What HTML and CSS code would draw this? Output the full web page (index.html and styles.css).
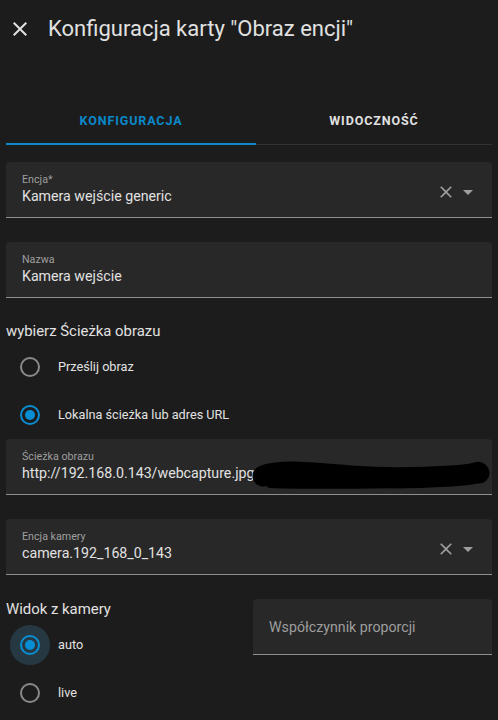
FILE: index.html
```html
<!DOCTYPE html>
<html lang="pl">
<head>
<meta charset="utf-8">
<link rel="stylesheet" href="styles.css">
</head>
<body>
<header class="header">
  <svg class="close" viewBox="0 0 24 24" width="24" height="24"><path d="M19,6.41L17.59,5L12,10.59L6.41,5L5,6.41L10.59,12L5,17.59L6.41,19L12,13.41L17.59,19L19,17.59L13.41,12L19,6.41Z"/></svg>
  <h1 class="title">Konfiguracja karty "Obraz encji"</h1>
</header>

<nav class="tabs">
  <div class="tab tab-active">KONFIGURACJA</div>
  <div class="tab tab-rest">WIDOCZNOŚĆ</div>
</nav>

<main class="content">
  <div class="field field-first">
    <div class="field-text">
      <div class="label">Encja*</div>
      <div class="value">Kamera wejście generic</div>
    </div>
    <div class="field-icons">
      <svg class="ico-clear" viewBox="0 0 24 24" width="20" height="20"><path d="M19,6.41L17.59,5L12,10.59L6.41,5L5,6.41L10.59,12L5,17.59L6.41,19L12,13.41L17.59,19L19,17.59L13.41,12L19,6.41Z"/></svg>
      <svg class="ico-drop" viewBox="0 0 24 24" width="24" height="24"><path d="M7,10L12,15L17,10H7Z"/></svg>
    </div>
  </div>

  <div class="field field-gap">
    <div class="field-text">
      <div class="label">Nazwa</div>
      <div class="value">Kamera wejście</div>
    </div>
  </div>

  <h2 class="heading heading-path">wybierz Ścieżka obrazu</h2>
  <div class="radio-row">
    <span class="radio-wrap"><span class="radio"></span></span>
    <span class="radio-label">Prześlij obraz</span>
  </div>
  <div class="radio-row">
    <span class="radio-wrap"><span class="radio radio-on"></span></span>
    <span class="radio-label">Lokalna ścieżka lub adres URL</span>
  </div>

  <div class="field field-scribbled">
    <div class="field-text">
      <div class="label">Ścieżka obrazu</div>
      <div class="value">http://192.168.0.143/webcapture.jpg</div>
    </div>
    <svg class="scribble" viewBox="0 0 240 30" width="240" height="30"><path d="M12,15 C30,8 60,12 100,15 S170,17 200,15 S226,10 228,12" fill="none" stroke="#000" stroke-width="21" stroke-linecap="round"/><path d="M20,20 C60,22 120,20 170,20" fill="none" stroke="#000" stroke-width="14" stroke-linecap="round"/></svg>
  </div>

  <div class="field field-gap">
    <div class="field-text">
      <div class="label">Encja kamery</div>
      <div class="value">camera.192_168_0_143</div>
    </div>
    <div class="field-icons">
      <svg class="ico-clear" viewBox="0 0 24 24" width="20" height="20"><path d="M19,6.41L17.59,5L12,10.59L6.41,5L5,6.41L10.59,12L5,17.59L6.41,19L12,13.41L17.59,19L19,17.59L13.41,12L19,6.41Z"/></svg>
      <svg class="ico-drop" viewBox="0 0 24 24" width="24" height="24"><path d="M7,10L12,15L17,10H7Z"/></svg>
    </div>
  </div>

  <div class="bottom-grid">
    <div class="col">
      <h2 class="heading">Widok z kamery</h2>
      <div class="radio-row">
        <span class="radio-wrap radio-focus"><span class="radio radio-on"></span></span>
        <span class="radio-label">auto</span>
      </div>
      <div class="radio-row">
        <span class="radio-wrap"><span class="radio"></span></span>
        <span class="radio-label">live</span>
      </div>
    </div>
    <div class="col">
      <div class="field field-empty">
        <span class="placeholder">Współczynnik proporcji</span>
      </div>
    </div>
  </div>
</main>
</body>
</html>
```

FILE: styles.css
```css
* { box-sizing: border-box; }

html, body {
  margin: 0;
  padding: 0;
  background: #1c1c1c;
  color: #e1e1e1;
  font-family: Roboto, "Noto Sans", "Liberation Sans", sans-serif;
  height: 720px;
  overflow: hidden;
}

.header {
  height: 58px;
  display: flex;
  align-items: center;
}

.close {
  margin-left: 8px;
  fill: #e1e1e1;
  flex: none;
}

.title {
  margin: 0 0 0 16px;
  font-size: 22px;
  line-height: 28px;
  font-weight: 400;
  color: #e1e1e1;
}

.tabs {
  margin: 39px 6px 0;
  height: 48px;
  display: flex;
  box-shadow: inset 0 -1px 0 #333333;
}

.tab {
  display: flex;
  align-items: center;
  justify-content: center;
  font-size: 12.5px;
  font-weight: 700;
  letter-spacing: 0.9px;
  color: #e1e1e1;
  border-bottom: 2px solid transparent;
}

.tab-active {
  flex: 0 0 250px;
  color: #0a88c9;
  border-bottom-color: #0a88c9;
}

.tab-rest {
  flex: 1 1 auto;
}

.content {
  padding: 0 6px;
}

.field {
  position: relative;
  height: 56px;
  background: #282828;
  border-radius: 4px 4px 0 0;
  border-bottom: 1px solid #8f8f8f;
  display: flex;
  padding: 11px 12px 0 16px;
}

.field-first { margin-top: 17px; }
.field-gap { margin-top: 24px; }

.field-text {
  flex: 1 1 auto;
  min-width: 0;
}

.label {
  font-size: 10.7px;
  line-height: 14px;
  color: #9e9e9e;
}

.value {
  font-size: 14.2px;
  line-height: 19px;
  color: #e1e1e1;
  white-space: nowrap;
}

.field-icons {
  display: flex;
  align-items: center;
  height: 38px;
  flex: none;
}

.ico-clear { fill: #9e9e9e; }
.ico-drop { fill: #9e9e9e; }

.scribble {
  position: absolute;
  left: 245px;
  top: 22px;
}

.heading {
  margin: 21px 0 0;
  font-size: 14.9px;
  line-height: 24px;
  font-weight: 400;
  color: #e1e1e1;
}

.radio-row {
  height: 48px;
  display: flex;
  align-items: center;
}

.radio-wrap {
  width: 40px;
  height: 40px;
  margin-left: 4px;
  border-radius: 50%;
  display: flex;
  align-items: center;
  justify-content: center;
}

.radio-focus {
  background: #263943;
}

.radio {
  width: 20px;
  height: 20px;
  border-radius: 50%;
  border: 2px solid #8a8a8a;
  display: flex;
  align-items: center;
  justify-content: center;
}

.radio-on {
  border-color: #0a8ed3;
}

.radio-on::after {
  content: "";
  width: 10px;
  height: 10px;
  border-radius: 50%;
  background: #0a8ed3;
}

.radio-label {
  margin-left: 8px;
  font-size: 12.7px;
  line-height: 20px;
  color: #e1e1e1;
}

.bottom-grid {
  margin-top: 22px;
  display: grid;
  grid-template-columns: 1fr 1fr;
  column-gap: 8px;
}

.bottom-grid .heading {
  margin: 0;
}

.field-empty {
  margin-top: 2px;
  align-items: center;
  padding: 0 16px;
}

.placeholder {
  font-size: 14.2px;
  line-height: 24px;
  color: #9e9e9e;
}
```
